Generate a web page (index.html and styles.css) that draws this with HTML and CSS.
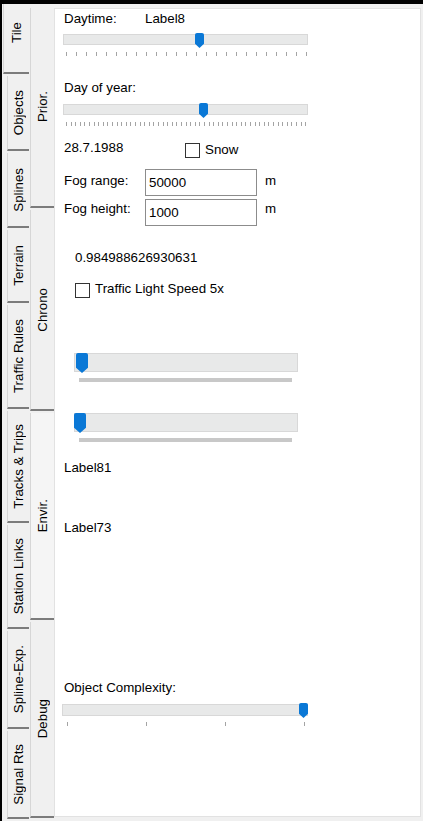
FILE: index.html
```html
<!DOCTYPE html>
<html lang="en">
<head>
<meta charset="utf-8">
<title>Settings</title>
<link rel="stylesheet" href="styles.css">
</head>
<body>
<div class="window">
  <nav class="outer-tabs">
    <div class="otab sel h-tile"><span>Tile</span></div>
    <div class="otab h-objects"><span>Objects</span></div>
    <div class="otab h-splines"><span>Splines</span></div>
    <div class="otab h-terrain"><span>Terrain</span></div>
    <div class="otab h-traffic"><span>Traffic Rules</span></div>
    <div class="otab h-tracks"><span>Tracks &amp; Trips</span></div>
    <div class="otab h-station"><span>Station Links</span></div>
    <div class="otab h-splexp"><span>Spline-Exp.</span></div>
    <div class="otab h-signal"><span>Signal Rts</span></div>
  </nav>
  <nav class="inner-tabs">
    <div class="itab h-prior"><span>Prior.</span></div>
    <div class="itab h-chrono"><span>Chrono</span></div>
    <div class="itab sel h-envir"><span>Envir.</span></div>
    <div class="itab h-debug"><span>Debug</span></div>
  </nav>
  <main class="panel">
    <div class="row r-daytime"><span class="lbl">Daytime:</span><span>Label8</span></div>
    <div class="slider s-daytime">
      <div class="track"><div class="thumb" style="left:131px"></div></div>
      <div class="ticks ticks-hours"></div>
    </div>

    <div class="row r-dayofyear"><span>Day of year:</span></div>
    <div class="slider s-dayofyear">
      <div class="track"><div class="thumb" style="left:135px"></div></div>
      <div class="ticks ticks-weeks"></div>
    </div>

    <div class="row r-date">
      <span class="date">28.7.1988</span>
      <label class="check snow"><span class="box"></span><span>Snow</span></label>
    </div>

    <div class="row r-fog r-fog1">
      <span class="lbl">Fog range:</span>
      <input class="field" type="text" value="50000" readonly>
      <span class="unit">m</span>
    </div>
    <div class="row r-fog r-fog2">
      <span class="lbl">Fog height:</span>
      <input class="field" type="text" value="1000" readonly>
      <span class="unit">m</span>
    </div>

    <div class="row r-value">0.984988626930631</div>

    <label class="row check r-traffic"><span class="box"></span><span>Traffic Light Speed 5x</span></label>

    <div class="slider big s-big1">
      <div class="track"><div class="thumb" style="left:1px"></div></div>
      <div class="tickbar"></div>
    </div>
    <div class="slider big s-big2">
      <div class="track"><div class="thumb" style="left:-1px"></div></div>
      <div class="tickbar"></div>
    </div>

    <div class="row r-label81">Label81</div>
    <div class="row r-label73">Label73</div>

    <div class="row r-complexity">Object Complexity:</div>
    <div class="slider s-complexity">
      <div class="track"><div class="thumb" style="left:236px"></div></div>
      <div class="ticks ticks-quarters"></div>
    </div>
  </main>
</div>
</body>
</html>
```

FILE: styles.css
```css
html, body {
  margin: 0;
  padding: 0;
}

body {
  width: 423px;
  height: 821px;
  overflow: hidden;
  background: #f0f0f0;
  font-family: "Liberation Sans", Arial, sans-serif;
  font-size: 13.33px;
  line-height: 15px;
  color: #000;
}

.window {
  display: flex;
  height: 821px;
  box-sizing: border-box;
  border-top: 4px solid #000;
  border-left: 2px solid #000;
}

/* ---------- outer vertical tabs ---------- */
.outer-tabs {
  width: 27px;
  flex: none;
  display: flex;
  flex-direction: column;
}

.otab {
  margin-left: 5px;
  width: 22px;
  box-sizing: border-box;
  border-left: 1px solid #d6d6d6;
  border-bottom: 2px solid #7c7c7c;
  margin-bottom: 2px;
  display: flex;
  align-items: center;
  justify-content: center;
  background: #f0f0f0;
  flex: none;
}

.otab.sel {
  margin-left: 1px;
  width: 26px;
  padding-bottom: 12px;
}

.otab span,
.itab span {
  writing-mode: vertical-rl;
  transform: rotate(180deg);
  white-space: nowrap;
}

.h-tile { height: 70px; }
.h-objects { height: 75px; }
.h-splines { height: 75px; }
.h-terrain { height: 73px; }
.h-traffic { height: 104px; }
.h-tracks { height: 112px; }
.h-station { height: 104px; }
.h-splexp { height: 98px; }
.h-signal { height: 88px; }

/* ---------- inner vertical tabs ---------- */
.inner-tabs {
  width: 25px;
  flex: none;
  padding-top: 4px;
  box-sizing: border-box;
  display: flex;
  flex-direction: column;
}

.itab {
  margin-left: 1px;
  width: 24px;
  box-sizing: border-box;
  border-left: 1px solid #d6d6d6;
  border-bottom: 2px solid #7c7c7c;
  margin-bottom: 2px;
  display: flex;
  align-items: center;
  justify-content: center;
  background: #f0f0f0;
  flex: none;
}

.itab.sel {
  background: #f5f5f5;
}

.h-prior { height: 200px; }
.h-chrono { height: 201px; }
.h-envir { height: 207px; }
.h-debug { height: 196px; }

/* ---------- content panel ---------- */
.panel {
  flex: 1;
  margin: 4px 2px 4px 0;
  background: #fff;
  border: 1px solid #e2e2e2;
  box-sizing: border-box;
  padding: 2px 0 0 9px;
}

.row {
  display: flex;
  align-items: flex-start;
  white-space: nowrap;
}

.lbl {
  width: 81px;
  flex: none;
}

.r-dayofyear { margin-top: 24px; }
.r-date { margin-top: 14px; }
.date { width: 121px; flex: none; }

.check {
  display: flex;
  align-items: flex-start;
  gap: 5px;
}

.check .box {
  width: 15px;
  height: 15px;
  box-sizing: border-box;
  border: 1px solid #333;
  background: #fff;
  margin-top: 1px;
  flex: none;
}

.check.snow {
  margin-top: 2px;
}

.r-fog1 { margin-top: 11px; }
.r-fog2 { margin-top: 3px; }

.r-fog1 .lbl, .r-fog1 .unit { margin-top: 4px; }
.r-fog2 .lbl, .r-fog2 .unit { margin-top: 2px; }

.field {
  width: 112px;
  height: 27px;
  box-sizing: border-box;
  border: 1px solid #8c8c8c;
  margin: 0;
  padding: 0 0 0 3px;
  font: inherit;
  line-height: 15px;
  color: #000;
  background: #fff;
  outline: none;
  flex: none;
}

.unit { margin-left: 8px; }

.r-value {
  margin-top: 24px;
  margin-left: 11px;
}

.r-traffic {
  margin-top: 16px;
  margin-left: 11px;
}

.r-traffic .box { margin-top: 2px; }

.r-label81 { margin-top: 18px; }
.r-label73 { margin-top: 45px; }
.r-complexity { margin-top: 145px; }

/* ---------- sliders ---------- */
.slider .track {
  position: relative;
  box-sizing: border-box;
  background: #e8e9e9;
  border: 1px solid #d8d8d8;
}

.thumb {
  position: absolute;
  top: -2px;
  width: 9px;
  height: 15px;
  background: #0a78d6;
  border-radius: 2px 2px 0 0;
  clip-path: polygon(0 0, 100% 0, 100% 72%, 50% 100%, 0 72%);
}

.s-daytime { margin-top: 8px; }
.s-dayofyear { margin-top: 9px; }
.s-complexity { margin-top: 9px; }

.s-daytime .track,
.s-dayofyear .track {
  margin-left: -1px;
  width: 245px;
  height: 11px;
}

.s-complexity .track {
  margin-left: -2px;
  width: 246px;
  height: 12px;
}

.ticks {
  margin-top: 7px;
  height: 4px;
}

.ticks-hours {
  margin-left: 2px;
  width: 241px;
  background: repeating-linear-gradient(to right, #a4a4a4 0 1px, transparent 1px 10px);
}

.ticks-weeks {
  margin-left: 2px;
  width: 240px;
  background:
    linear-gradient(#a4a4a4, #a4a4a4) right top / 1px 100% no-repeat,
    repeating-linear-gradient(to right, #a4a4a4 0 1px, transparent 1px 4.6px) left top / 237px 100% no-repeat;
}

.ticks-quarters {
  margin-top: 6px;
  margin-left: 3px;
  width: 238px;
  background: repeating-linear-gradient(to right, #a4a4a4 0 1px, transparent 1px 79px);
}

.big .track {
  margin-left: 10px;
  width: 224px;
  height: 19px;
}

.big .thumb {
  top: -1px;
  width: 12px;
  height: 20px;
  clip-path: polygon(0 0, 100% 0, 100% 74%, 50% 100%, 0 74%);
}

.s-big1 { margin-top: 55px; }
.s-big2 { margin-top: 31px; }

.tickbar {
  margin-top: 6px;
  margin-left: 15px;
  width: 213px;
  height: 4px;
  background: #c8c8c8;
}
```
